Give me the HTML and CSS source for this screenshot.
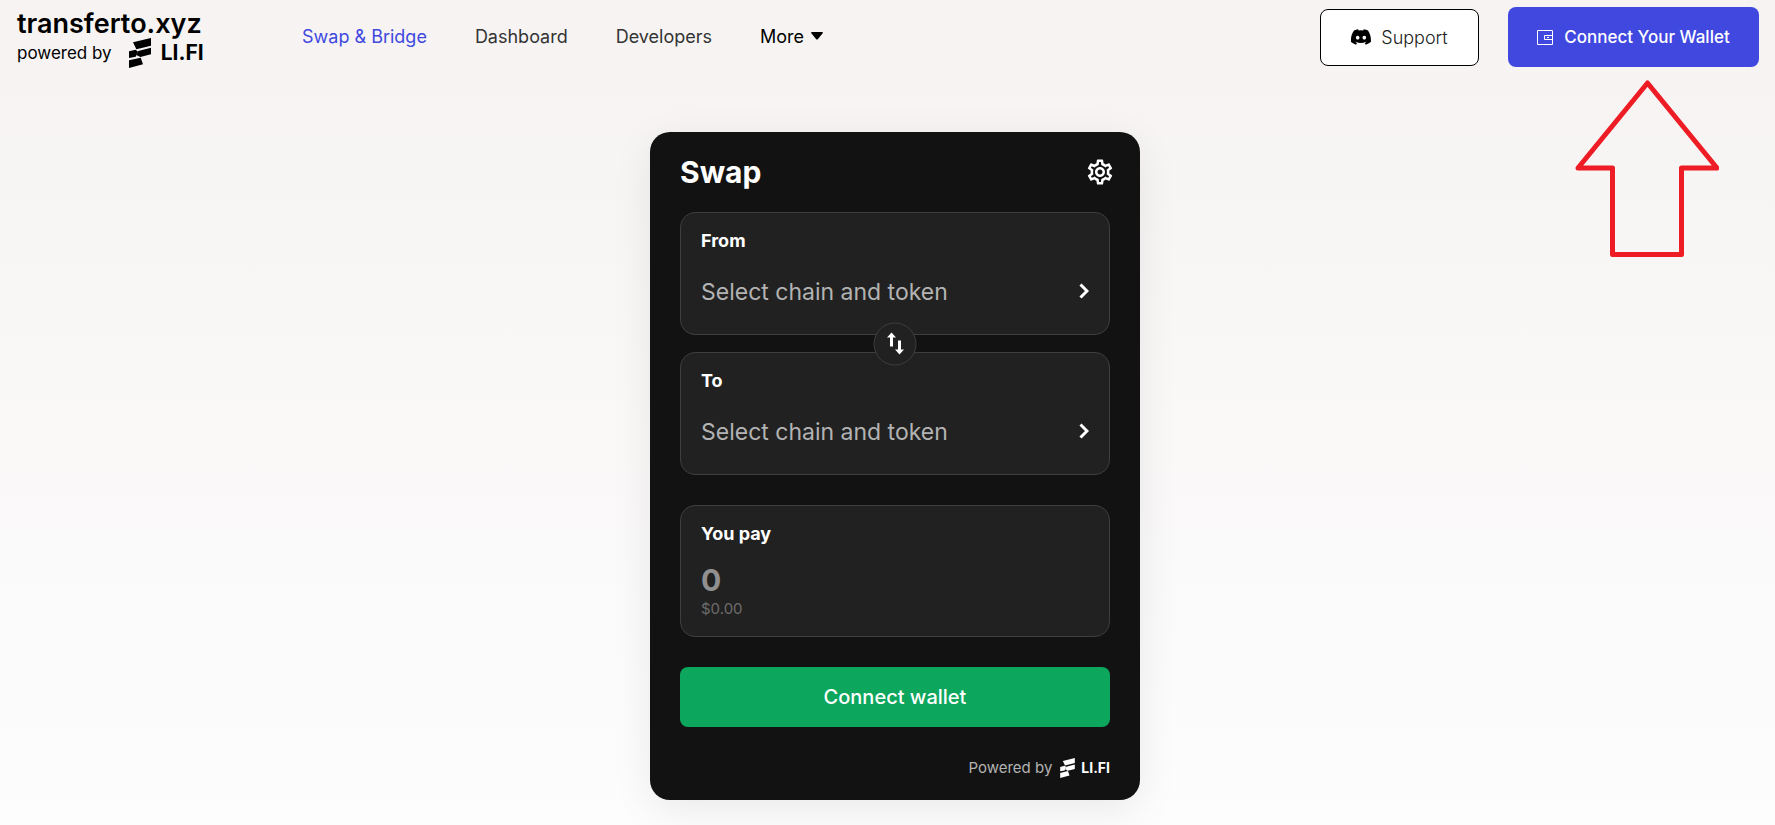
FILE: index.html
```html
<!DOCTYPE html>
<html lang="en">
<head>
    <meta charset="UTF-8">
    <meta name="viewport" content="width=device-width, initial-scale=1.0">
    <title>transferto.xyz</title>
    <link rel="stylesheet" href="styles.css">
</head>
<body>
    <svg class="defs" aria-hidden="true">
        <symbol id="lifi" viewBox="0 0 66 90">
            <path d="M12 13L66 0V23L22 34Z"/>
            <path d="M0 40L20 35L27 41L20 56L0 60Z"/>
            <path d="M28 39L66 29V49L34 57L22 51Z"/>
            <path d="M0 67L35 59L42 79L0 90Z"/>
        </symbol>
    </svg>

    <header class="navbar">
        <a href="#" class="logo">
            <span class="logo-name">transferto.xyz</span>
            <span class="logo-sub">
                powered by
                <svg class="logo-icon"><use href="#lifi"/></svg>
                <b>LI.FI</b>
            </span>
        </a>
        <nav class="menu">
            <a href="#" class="active">Swap &amp; Bridge</a>
            <a href="#">Dashboard</a>
            <a href="#">Developers</a>
            <button class="more">More
                <svg width="12" height="8" viewBox="0 0 12 8"><path d="M1 0H11Q12.500 0 11.500 1.500L7 7Q6 8 5 7L.5 1.500Q-.5 0 1 0Z"/></svg>
            </button>
        </nav>
        <div class="actions">
            <button class="support">
                <svg width="20" height="16" viewBox="0 0 127 97"><path fill-rule="evenodd" d="M108 8A105 105 0 0 0 81 0l-3 7a98 98 0 0 0-29 0L45 0A105 105 0 0 0 19 8C2 33-2 57 0 81a106 106 0 0 0 32 16l7-11-11-5 3-2a75 75 0 0 0 64 0l3 2-11 5 7 11a105 105 0 0 0 32-16c3-28-4-52-18-73ZM42 65c-6 0-11-6-11-13s5-12 11-12 12 5 12 12-5 13-12 13Zm43 0c-7 0-12-6-12-13s5-12 12-12 11 5 11 12-5 13-11 13Z"/></svg>
                Support
            </button>
            <button class="connect">
                <svg width="16" height="15" viewBox="0 0 16 15" fill="none" stroke="currentColor"><path d="M.5 .5H15.500V14.500H.5ZM15.500 5.500H7.500V9.500H15.500"/><path d="M10 7.500H12"/></svg>
                Connect Your Wallet
            </button>
            <svg class="arrow" width="144" height="178" viewBox="0 0 144 178"><path d="M72.500 3L142 88H106.500V174.500H37.500V88H3Z"/></svg>
        </div>
    </header>

    <main>
        <section class="card">
            <div class="card-head">
                <h1>Swap</h1>
                <button class="settings" aria-label="Settings">
                    <svg width="30" height="30" viewBox="0 0 24 24"><path d="M19.430 12.980c.04-.32.07-.64.07-.98s-.03-.66-.07-.98l2.110-1.650c.19-.15.24-.42.12-.64l-2-3.460c-.09-.16-.26-.25-.44-.25-.06 0-.12.010-.17.030l-2.490 1c-.52-.4-1.080-.73-1.690-.98l-.38-2.650C14.460 2.180 14.250 2 14 2h-4c-.25 0-.46.180-.49.420l-.38 2.650c-.61.250-1.170.590-1.690.98l-2.490-1c-.06-.02-.12-.03-.18-.03-.17 0-.34.090-.43.250l-2 3.460c-.13.220-.07.490.12.640l2.110 1.650c-.04.320-.07.650-.07.980s.03.660.07.980l-2.110 1.650c-.19.150-.24.420-.12.640l2 3.460c.09.160.26.250.44.250.06 0 .12-.01.17-.03l2.490-1c.52.400 1.080.730 1.690.980l.38 2.650c.03.240.24.420.49.420h4c.25 0 .46-.18.49-.42l.38-2.650c.61-.25 1.170-.59 1.690-.98l2.490 1c.06.020.12.030.18.030.17 0 .34-.09.43-.25l2-3.460c.12-.22.07-.49-.12-.64l-2.110-1.650zm-1.980-1.710c.04.310.05.520.05.730 0 .21-.02.430-.05.730l-.14 1.130.89.700 1.080.84-.7 1.210-1.270-.51-1.040-.42-.9.680c-.43.320-.84.560-1.250.730l-1.060.43-.16 1.130-.2 1.350h-1.400l-.19-1.350-.16-1.130-1.060-.43c-.43-.18-.83-.41-1.230-.71l-.91-.7-1.060.43-1.270.51-.7-1.210 1.080-.84.89-.7-.14-1.130c-.03-.31-.05-.54-.05-.74s.02-.43.050-.73l.14-1.130-.89-.7-1.080-.84.7-1.210 1.270.51 1.040.42.900-.68c.43-.32.84-.56 1.250-.73l1.060-.43.160-1.130.2-1.350h1.390l.19 1.350.16 1.130 1.060.43c.43.180.83.410 1.230.71l.91.700 1.060-.43 1.270-.51.700 1.210-1.070.85-.89.700.14 1.130zM12 8c-2.210 0-4 1.790-4 4s1.790 4 4 4 4-1.790 4-4-1.790-4-4-4zm0 6c-1.100 0-2-.9-2-2s.9-2 2-2 2 .9 2 2-.9 2-2 2z"/></svg>
                </button>
            </div>

            <div class="tokens">
                <button class="box token">
                    <span class="title">From</span>
                    <span class="select">Select chain and token
                        <svg width="10" height="18" viewBox="0 0 10 18"><path d="M1.500 1.500L8 8L1.500 14.500"/></svg>
                    </span>
                </button>
                <button class="reverse" aria-label="Reverse">
                    <svg width="18" height="24" viewBox="0 0 18 24"><path d="M5 1L0.500 6H3.500V15H6.500V6H9.500ZM13 23L17.500 18H14.500V9H11.500V18H8.500Z"/></svg>
                </button>
                <button class="box token">
                    <span class="title">To</span>
                    <span class="select">Select chain and token
                        <svg width="10" height="18" viewBox="0 0 10 18"><path d="M1.500 1.500L8 8L1.500 14.500"/></svg>
                    </span>
                </button>
            </div>

            <div class="box pay">
                <label class="title" for="amount">You pay</label>
                <input id="amount" type="text" placeholder="0">
                <span class="usd">$0.00</span>
            </div>

            <button class="submit">Connect wallet</button>

            <a href="#" class="powered">
                Powered by
                <svg class="powered-icon"><use href="#lifi"/></svg>
                <b>LI.FI</b>
            </a>
        </section>
    </main>
</body>
</html>
```
FILE: styles.css
```css
* {
    box-sizing: border-box;
}

body {
    margin: 0;
    min-height: 100vh;
    font-family: Inter, 'Liberation Sans', sans-serif;
    background: linear-gradient(#f6f3f2, #fdfdfd);
}

button {
    font-family: inherit;
    border: none;
    padding: 0;
    background: none;
    cursor: pointer;
}

a {
    color: inherit;
    text-decoration: none;
}

.defs {
    display: none;
}

.navbar {
    display: flex;
    align-items: center;
    height: 74px;
    padding: 0 16px;
}

.logo {
    width: 286px;
    padding: 4px 0 0 1px;
    color: #000;
}

.logo-name {
    display: block;
    font-size: 27px;
    line-height: 28px;
    font-weight: 600;
}

.logo-sub {
    display: flex;
    align-items: center;
    font-size: 17px;
    line-height: 30px;
}

.logo-icon {
    width: 22px;
    height: 30px;
    margin: 0 10px 0 17px;
}

.logo-sub b {
    font-size: 21px;
}

.menu {
    display: flex;
    gap: 48px;
    padding-bottom: 2px;
    font-size: 18px;
    color: #333;
}

.menu .active {
    color: #4048e0;
}

.more {
    display: flex;
    align-items: center;
    gap: 7px;
    font-size: 18px;
    color: #000;
}

.actions {
    position: relative;
    display: flex;
    align-items: center;
    gap: 29px;
    margin-left: auto;
}

.support,
.connect {
    display: flex;
    align-items: center;
    justify-content: center;
    border-radius: 8px;
}

.support {
    gap: 10px;
    width: 159px;
    height: 57px;
    font-size: 18px;
    color: #222;
    font-weight: 300;
    background: #fff;
    border: 1px solid #000;
}

.support svg {
    fill: #000;
}

.connect {
    gap: 11px;
    width: 251px;
    height: 60px;
    font-size: 17px;
    color: #fff;
    font-weight: 500;
    background: #4048e0;
}

.arrow {
    position: absolute;
    top: 73px;
    right: 40px;
    fill: none;
    stroke: #ee1c24;
    stroke-width: 5;
    stroke-linejoin: round;
}

main {
    display: flex;
    justify-content: center;
    padding: 58px 0 25px 15px;
}

.card {
    width: 490px;
    padding: 20px 30px;
    border-radius: 20px;
    color: #fff;
    background: #121212;
    box-shadow: 0 10px 40px rgba(0, 0, 0, .08);
}

.card-head {
    display: flex;
    align-items: center;
    justify-content: space-between;
    height: 40px;
    margin-bottom: 20px;
}

h1 {
    margin: 0;
    font-size: 30px;
    line-height: 40px;
    font-weight: 700;
}

.settings {
    height: 30px;
    margin-right: -5px;
}

.settings svg {
    fill: #fff;
}

.tokens {
    position: relative;
    display: grid;
    gap: 17px;
}

.box {
    display: flex;
    flex-direction: column;
    width: 100%;
    padding: 17px 20px;
    border: 1px solid #3e3e3e;
    border-radius: 15px;
    color: #fff;
    text-align: left;
    background: #212121;
}

.token {
    height: 123px;
}

.title {
    font-size: 18px;
    line-height: 22px;
    font-weight: 700;
}

.select {
    display: flex;
    align-items: center;
    justify-content: space-between;
    width: 100%;
    margin-top: 24px;
    font-size: 23px;
    line-height: 32px;
    color: #b3b3b3;
}

.select svg {
    fill: none;
    stroke: #fff;
    stroke-width: 3;
}

.reverse {
    position: absolute;
    top: 50%;
    left: 50%;
    display: grid;
    place-items: center;
    width: 43px;
    height: 43px;
    border: 1px solid #3e3e3e;
    border-radius: 50%;
    background: #212121;
    transform: translate(-50%, -50%);
}

.reverse svg {
    fill: #fff;
}

.pay {
    margin: 30px 0;
    height: 132px;
}

.pay input {
    width: 100%;
    height: 40px;
    margin-top: 16px;
    padding: 0;
    border: none;
    outline: none;
    font-family: inherit;
    font-size: 30px;
    font-weight: 700;
    color: #fff;
    background: none;
}

.pay input::placeholder {
    color: #909090;
}

.usd {
    font-size: 15px;
    line-height: 20px;
    color: #6c6c6c;
}

.submit {
    width: 100%;
    height: 60px;
    border-radius: 8px;
    font-size: 20px;
    font-weight: 500;
    color: #fff;
    background: #0ca65c;
}

.powered {
    display: flex;
    align-items: center;
    justify-content: flex-end;
    margin: 30px 0 1px;
    font-size: 15px;
    line-height: 22px;
    color: #b3b3b3;
}

.powered-icon {
    width: 15px;
    height: 20px;
    margin: 0 6px 0 8px;
    fill: #fff;
}

.powered b {
    font-size: 14px;
    color: #fff;
}
```
